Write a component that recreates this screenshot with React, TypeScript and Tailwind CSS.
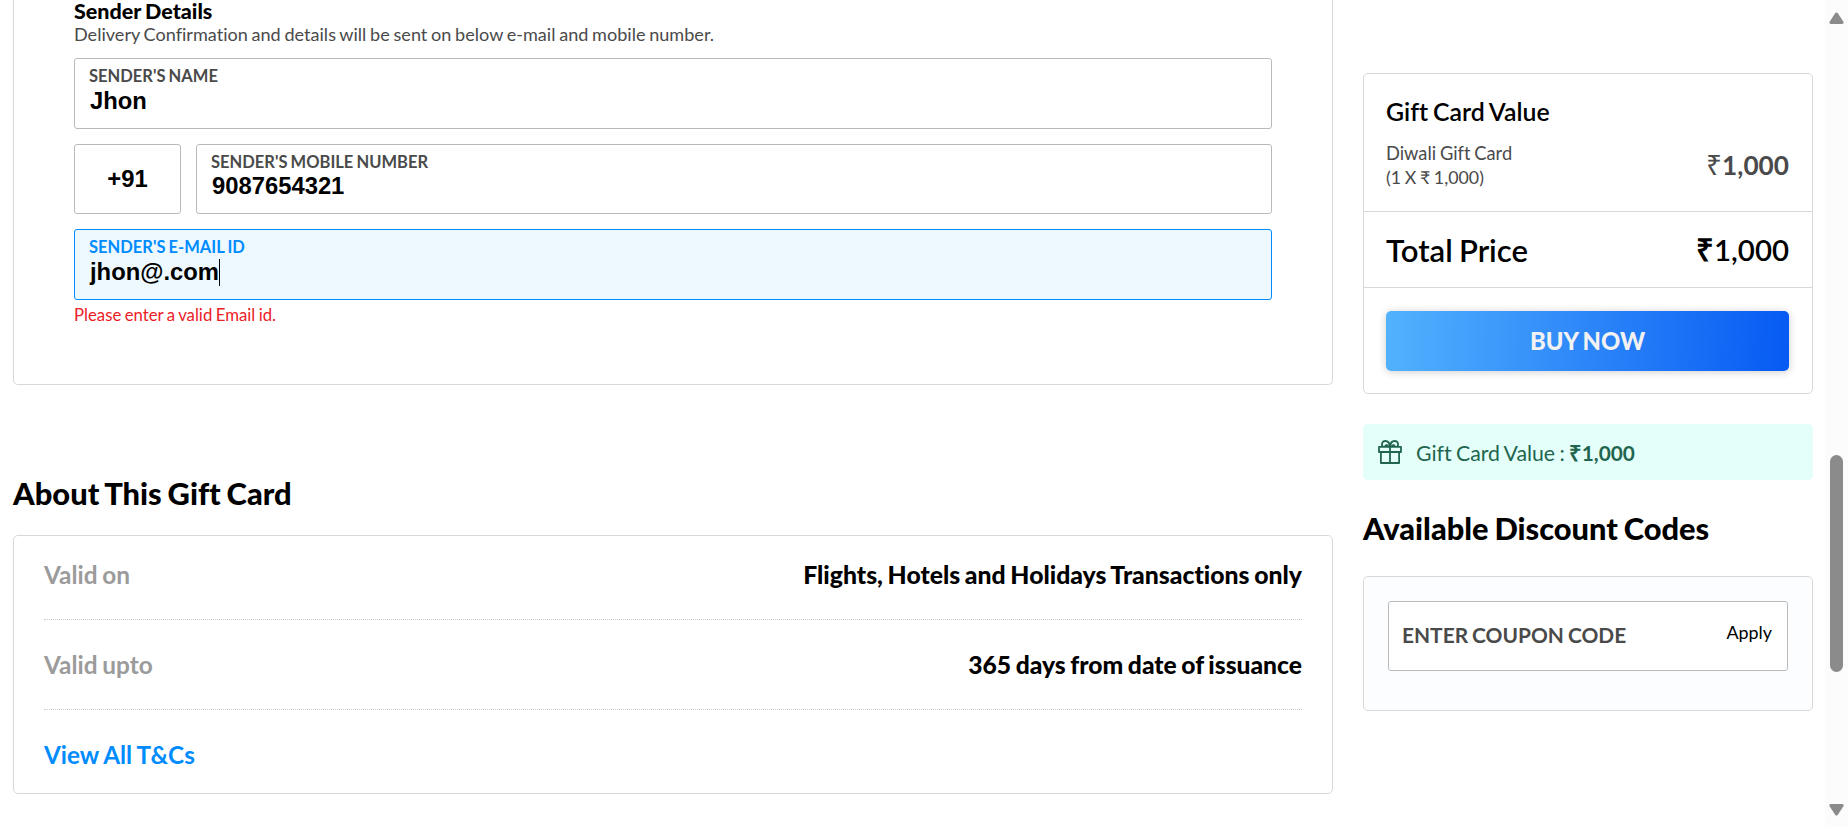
function Field({
  label,
  value,
  active = false,
  className = "",
  valueClass = "pt-px",
}: {
  label: string;
  value: string;
  active?: boolean;
  className?: string;
  valueClass?: string;
}) {
  return (
    <div
      className={`rounded-[3px] border px-[14px] pt-[7px] ${
        active ? "border-[#008cff] bg-[#eef9ff]" : "border-[#bababa] bg-white"
      } ${className}`}
    >
      <div
        className={`text-[16.5px] leading-5 font-bold [word-spacing:-0.05em] ${active ? "text-[#008cff]" : "text-[#4a4a4a]"}`}
      >
        {label}
      </div>
      <div
        className={`ml-px flex items-center font-['Liberation_Sans',Arial,sans-serif] text-[23.8px] leading-7 font-bold text-black ${valueClass}`}
      >
        <span>{value}</span>
        {active && <span className="h-[27px] w-px bg-black" />}
      </div>
    </div>
  );
}

function InfoRow({ label, value, valueClass }: { label: string; value: string; valueClass: string }) {
  return (
    <div className="flex justify-between border-b border-dotted border-[#cbcbcb] pt-[30px] pb-[29px] first:pt-6">
      <span className="text-[24.4px] leading-[30px] font-bold text-[#9b9b9b] [word-spacing:-0.05em]">{label}</span>
      <span className={`leading-[30px] font-black text-black [word-spacing:-0.05em] ${valueClass}`}>{value}</span>
    </div>
  );
}

function GiftIcon() {
  return (
    <svg width="24" height="24" viewBox="0 0 24 24" fill="none" stroke="#21654f" strokeWidth="1.8" strokeLinejoin="round">
      <path d="M1 6.800h22v5.200H1zM2.900 12v11h18.200V12M12 6.800V23" />
      <path d="M4.600 6.600C3 4.200 4.200 1 7.400 1 10 1 11.600 2.900 12 6.600 12.400 2.900 14 1 16.600 1c3.200 0 4.400 3.200 2.800 5.600M7 6.600c.3-1.700 2.100-2 3.300-.8M17 6.600c-.3-1.700-2.100-2-3.300-.8" />
    </svg>
  );
}

function SenderCard() {
  return (
    <section className="h-[385px] rounded-b-[5px] border border-t-0 border-[#d8d8d8] px-[60px]">
      <h3 className="text-[21.5px] leading-[22px] font-black text-black [word-spacing:-0.05em]">Sender Details</h3>
      <p className="mt-[3px] text-[18.08px] leading-[19px] text-[#4a4a4a] [word-spacing:-0.05em]">
        Delivery Confirmation and details will be sent on below e-mail and mobile number.
      </p>
      <Field label="SENDER'S NAME" value="Jhon" className="mt-[14px] h-[71px]" />
      <div className="mt-[15px] flex gap-[15px]">
        <div className="flex h-[70px] w-[107px] items-center justify-center rounded-[3px] border border-[#bababa] font-['Liberation_Sans',Arial,sans-serif] text-[23.8px] font-bold text-black">
          +91
        </div>
        <Field label="SENDER'S MOBILE NUMBER" value="9087654321" className="h-[70px] flex-1" valueClass="pt-0" />
      </div>
      <Field label="SENDER'S E-MAIL ID" value="jhon@.com" active className="mt-[15px] h-[71px]" />
      <p className="mt-[5px] text-[16.75px] leading-5 text-[#eb2026] [word-spacing:-0.05em]">Please enter a valid Email id.</p>
    </section>
  );
}

function AboutCard() {
  return (
    <>
      <h2 className="mt-[91px] text-[30.9px] leading-9 font-black text-black [word-spacing:-0.05em]">About This Gift Card</h2>
      <section className="mt-[23px] rounded-[5px] border border-[#d8d8d8] px-[30px] pb-[23px]">
        <InfoRow label="Valid on" value="Flights, Hotels and Holidays Transactions only" valueClass="text-[24.77px]" />
        <InfoRow label="Valid upto" value="365 days from date of issuance" valueClass="text-[24.65px]" />
        <a className="block pt-[30px] text-[24.3px] leading-[30px] font-bold text-[#008cff] [word-spacing:-0.03em]">
          View All T&amp;Cs
        </a>
      </section>
    </>
  );
}

function PriceCard() {
  return (
    <section className="rounded-[5px] border border-[#d8d8d8]">
      <div className="h-[137px] pt-[22px] pr-[23px] pl-[22px]">
        <h3 className="text-[24.85px] leading-[30px] font-semibold text-black [word-spacing:-0.05em]">Gift Card Value</h3>
        <div className="mt-[15px] flex items-start justify-between text-[#4a4a4a]">
          <div>
            <div className="text-[18.3px] leading-6 [word-spacing:-0.05em]">Diwali Gift Card</div>
            <div className="text-[17.8px] leading-[25px] [word-spacing:-0.05em]">(1 X ₹ 1,000)</div>
          </div>
          <div className="flex items-baseline pt-2 text-[26.2px] leading-[30px] font-bold">
            <span className="font-['Open_Sans',sans-serif] text-[28px] font-normal">₹</span>
            <span>1,000</span>
          </div>
        </div>
      </div>
      <div className="flex h-[77px] items-center justify-between border-y border-[#d8d8d8] pr-[23px] pl-[22px] font-semibold text-black">
        <span className="text-[31.1px] leading-9 [word-spacing:-0.05em]">Total Price</span>
        <span className="flex items-baseline text-[29.4px] leading-9">
          <span className="font-['Open_Sans',sans-serif] text-[31px] font-bold">₹</span>
          <span>1,000</span>
        </span>
      </div>
      <div className="pt-[23px] pr-[23px] pb-[22px] pl-[22px]">
        <button className="block h-[60px] w-full rounded-[5px] bg-[linear-gradient(93deg,#53b2fe,#065af3)] pt-px text-[23.8px] font-black text-[#f2f2f2] shadow-[0_1px_9px_0_rgba(0,0,0,0.2)] [word-spacing:-0.05em]">
          BUY NOW
        </button>
      </div>
    </section>
  );
}

function ScrollBar() {
  return (
    <div className="flex h-full w-[23px] flex-col items-center bg-[#fcfcfc]">
      <svg className="mt-[12px]" width="15" height="12" viewBox="0 0 15 12" fill="#8b8b8b">
        <path d="M6.300 1.100q1.200-1 2.400 0l5.700 8.700q.8 2-1.200 2.200H1.800q-2-.2-1.200-2.200z" />
      </svg>
      <div className="mt-[431px] h-[217px] w-[13px] rounded-full bg-[#8b8b8b]" />
      <svg className="mt-[132px]" width="15" height="12" viewBox="0 0 15 12" fill="#8b8b8b">
        <path d="M6.300 10.900q1.200 1 2.400 0l5.700-8.700q.8-2-1.200-2.200H1.800q-2 .2-1.200 2.200z" />
      </svg>
    </div>
  );
}

export default function App() {
  return (
    <div className="flex h-[827px] w-[1848px] overflow-hidden bg-white font-[Lato,sans-serif] [font-variant-ligatures:none]">
      <main className="ml-[13px] w-[1320px]">
        <SenderCard />
        <AboutCard />
      </main>
      <aside className="mr-3 ml-[30px] w-[450px] pt-[73px]">
        <PriceCard />
        <div className="mt-[30px] flex h-14 items-center rounded-[5px] bg-[#e4fff9] pl-[15px] text-[#21654f]">
          <GiftIcon />
          <p className="ml-[14px] flex items-baseline leading-6">
            <span className="text-[21.25px] [word-spacing:-0.05em]">Gift Card Value :</span>
            <span className="ml-1 font-['Open_Sans',sans-serif] text-[22px] font-bold">₹</span>
            <span className="text-[20.8px] font-bold">1,000</span>
          </p>
        </div>
        <h2 className="mt-[31px] text-[30.8px] leading-9 font-black text-black [word-spacing:-0.05em]">Available Discount Codes</h2>
        <section className="mt-[29px] rounded-[5px] border border-[#d8d8d8] bg-[#fcfdff] px-6 pt-6 pb-[39px]">
          <div className="flex h-[70px] items-center justify-between rounded-[3px] border border-[#bababa] bg-white pr-[15px] pl-[13px]">
            <span className="pb-0.5 text-[20.9px] font-bold text-[#4a4a4a] [word-spacing:-0.05em]">ENTER COUPON CODE</span>
            <span className="pb-[7px] text-[17.9px] text-black">Apply</span>
          </div>
        </section>
      </aside>
      <ScrollBar />
    </div>
  );
}
